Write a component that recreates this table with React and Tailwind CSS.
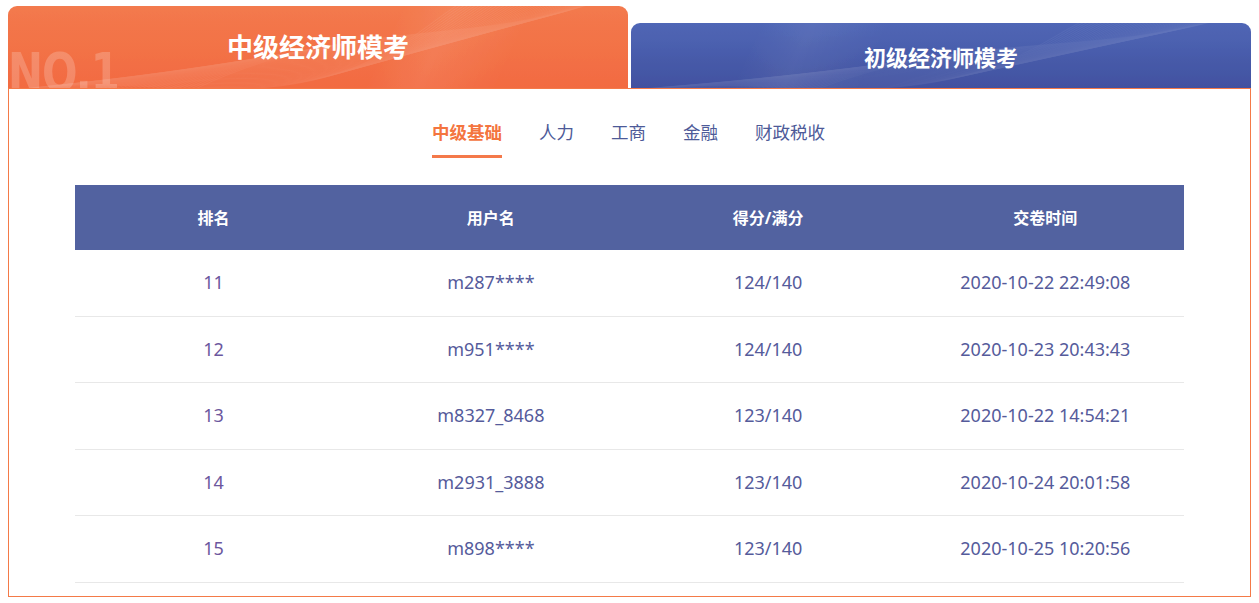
import React from "react";

const font = { fontFamily: '"Noto Sans", "Noto Sans CJK SC", sans-serif' };

const subTabs = ["中级基础", "人力", "工商", "金融", "财政税收"];

const rows = [
  { rank: 11, user: "m287****", score: "124/140", time: "2020-10-22 22:49:08" },
  { rank: 12, user: "m951****", score: "124/140", time: "2020-10-23 20:43:43" },
  { rank: 13, user: "m8327_8468", score: "123/140", time: "2020-10-22 14:54:21" },
  { rank: 14, user: "m2931_3888", score: "123/140", time: "2020-10-24 20:01:58" },
  { rank: 15, user: "m898****", score: "123/140", time: "2020-10-25 10:20:56" },
];

// faint wave lines drawn over the tab backgrounds
const Waves = ({ opacity = 0.12 }) => {
  const lines = [];
  for (let i = 0; i < 44; i++) {
    const o = i * 5;
    lines.push(
      <path
        key={i}
        d={`M${-60 + o} 100 C ${120 + o} ${40 - i} ${260 + o} ${140 - i * 2} ${420 + o} ${20 - i} S ${600 + o} ${-40 + i} ${700 + o} ${-10 + i}`}
        fill="none"
        stroke="white"
        strokeWidth="0.5"
      />
    );
  }
  return (
    <svg className="absolute inset-0 w-full h-full" viewBox="0 0 620 82" preserveAspectRatio="none" style={{ opacity }}>
      {lines}
    </svg>
  );
};

export default function App() {
  return (
    <div className="w-[1259px] h-[603px] bg-white pt-[6px] pl-[8px]" style={font}>
      {/* exam tabs */}
      <div className="flex items-end gap-[3px] h-[82px]">
        <div className="relative w-[620px] h-[82px] rounded-t-[9px] overflow-hidden bg-gradient-to-b from-[#f37a4d] to-[#f26b42] flex items-center justify-center">
          <div className="absolute inset-0 bg-[linear-gradient(115deg,transparent_60%,rgba(255,255,255,0.08)_68%,transparent_80%)]" />
          <Waves opacity={0.13} />
          <span
            className="absolute left-[0px] bottom-[-12px] text-[54px] font-bold text-white/20 leading-none tracking-[-1px] scale-x-[0.86] origin-left"
            style={{ fontFamily: '"DejaVu Sans Condensed", "DejaVu Sans", sans-serif' }}
          >
            NO.1
          </span>
          <span className="relative text-white text-[26px] font-bold">中级经济师模考</span>
        </div>
        <div className="relative w-[620px] h-[65px] rounded-t-[9px] overflow-hidden bg-gradient-to-b from-[#5067b6] to-[#4252a0] flex items-center justify-center">
          <div className="absolute inset-0 bg-[linear-gradient(115deg,transparent_20%,rgba(255,255,255,0.06)_28%,transparent_40%)]" />
          <Waves opacity={0.1} />
          <span className="relative text-white text-[22px] font-bold pt-[3px]">初级经济师模考</span>
        </div>
      </div>

      {/* panel */}
      <div className="w-[1243px] h-[509px] border border-[#f47a48] px-[66px]">
        <div className="flex justify-center gap-[37px] pt-[32px] pr-[2px]">
          {subTabs.map((t, i) => (
            <div key={t} className="flex flex-col items-center">
              <span
                className={`text-[17.5px] leading-[22px] ${i === 0 ? "text-[#f4753f] font-bold" : "text-[#4d5a98]"}`}
              >
                {t}
              </span>
              <div className={`mt-[12px] h-[3px] w-full ${i === 0 ? "bg-[#f4794a]" : ""}`} />
            </div>
          ))}
        </div>

        <div className="mt-[27px]">
          <div className="grid grid-cols-4 h-[65px] items-center bg-[#5262a0] text-white text-[16px] font-bold text-center">
            <div>排名</div>
            <div>用户名</div>
            <div>得分/满分</div>
            <div>交卷时间</div>
          </div>
          {rows.map((r) => (
            <div
              key={r.rank}
              className="grid grid-cols-4 h-[66.5px] items-center border-b border-[#e8e8e8] text-center text-[18px] text-[#555b9b]"
            >
              <div className="text-[#6c579e]">{r.rank}</div>
              <div>{r.user}</div>
              <div>{r.score}</div>
              <div>{r.time}</div>
            </div>
          ))}
        </div>
      </div>
    </div>
  );
}
